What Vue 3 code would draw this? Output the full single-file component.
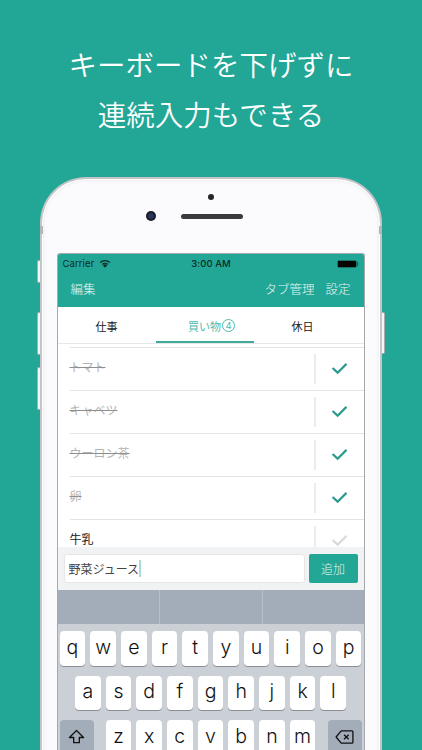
<script setup>
const items = [
  { name: 'トマト', done: true },
  { name: 'キャベツ', done: true },
  { name: 'ウーロン茶', done: true },
  { name: '卵', done: true },
  { name: '牛乳', done: false },
]
const rows = [
  { cls: 'row-q', keys: ['q', 'w', 'e', 'r', 't', 'y', 'u', 'i', 'o', 'p'] },
  { cls: 'row-a', keys: ['a', 's', 'd', 'f', 'g', 'h', 'j', 'k', 'l'] },
]
const zKeys = ['z', 'x', 'c', 'v', 'b', 'n', 'm']
</script>

<template>
  <div class="page">
    <h1 class="title">
      <span>キーボードを下げずに</span>
      <span>連続入力もできる</span>
    </h1>
    <div class="phone">
      <i class="btn btn-mute"></i>
      <i class="btn btn-up"></i>
      <i class="btn btn-down"></i>
      <i class="btn btn-power"></i>
      <i class="band band-l"></i>
      <i class="band band-r"></i>
      <div class="bezel-top">
        <i class="speaker-dot"></i>
        <div class="cam-row">
          <i class="camera"></i>
          <i class="speaker"></i>
        </div>
      </div>
      <div class="screen">
        <header class="head">
          <div class="status">
            <div class="status-left">
              <span>Carrier</span>
              <svg class="wifi" viewBox="0 0 14 10" width="12" height="9">
                <path d="M7 10 4.6 7.2a3.4 3.4 0 0 1 4.8 0Z" fill="#0c2a26" />
                <path d="M3.1 5.6a5.6 5.6 0 0 1 7.8 0l-1 1.1a4.2 4.2 0 0 0-5.8 0Z" fill="#0c2a26" />
                <path d="M.8 3.3a8.9 8.9 0 0 1 12.4 0l-1.1 1.2a7.3 7.3 0 0 0-10.2 0Z" fill="#0c2a26" />
              </svg>
            </div>
            <span class="clock">3:00 AM</span>
            <div class="battery"><i></i></div>
          </div>
          <nav class="nav">
            <span>編集</span>
            <div class="nav-right">
              <span>タブ管理</span>
              <span>設定</span>
            </div>
          </nav>
        </header>
        <div class="tabs">
          <div class="tab">仕事</div>
          <div class="tab active">買い物<span class="count">4</span></div>
          <div class="tab">休日</div>
        </div>
        <ul class="list">
          <li v-for="item in items" :key="item.name" class="item">
            <span class="name" :class="{ done: item.done }">{{ item.name }}</span>
            <div class="check-cell">
              <svg viewBox="0 0 18 14" width="17" height="13" class="check" :class="{ on: item.done }">
                <path d="M1.5 6.5 7 11.5 16.5 2" fill="none" stroke="currentColor" stroke-width="2.4" />
              </svg>
            </div>
          </li>
        </ul>
        <div class="input-bar">
          <div class="input">野菜ジュース<i class="caret"></i></div>
          <button class="add">追加</button>
        </div>
        <div class="suggest"><i></i><i></i><i></i></div>
        <div class="keyboard">
          <div v-for="row in rows" :key="row.cls" class="key-row" :class="row.cls">
            <div v-for="k in row.keys" :key="k" class="key">{{ k }}</div>
          </div>
          <div class="key-row row-z">
            <div class="key fn">
              <svg viewBox="0 0 18 17" width="17" height="16">
                <path d="M9 1.5 1.5 9H6v5.5h6V9h4.5Z" fill="none" stroke="#111" stroke-width="1.4" stroke-linejoin="round" />
              </svg>
            </div>
            <div class="letters">
              <div v-for="k in zKeys" :key="k" class="key">{{ k }}</div>
            </div>
            <div class="key fn">
              <svg viewBox="0 0 20 15" width="19" height="14">
                <path d="M6.5 1H18a1 1 0 0 1 1 1v11a1 1 0 0 1-1 1H6.5L1 7.5Z" fill="none" stroke="#111" stroke-width="1.4" stroke-linejoin="round" />
                <path d="m9.5 5 5 5m0-5-5 5" fill="none" stroke="#111" stroke-width="1.4" />
              </svg>
            </div>
          </div>
        </div>
      </div>
    </div>
  </div>
</template>

<style>
html, body { margin: 0; background: #22a797; }
</style>

<style scoped>
.page {
  width: 422px;
  height: 750px;
  overflow: hidden;
  background: #22a797;
  font-family: "Noto Sans CJK JP", "Noto Sans", sans-serif;
  box-sizing: border-box;
  padding-top: 39px;
}
.title {
  margin: 0 0 38px;
  display: flex;
  flex-direction: column;
  align-items: center;
  color: #fff;
  font-size: 28.5px;
  font-weight: 350;
  line-height: 50px;
}
.phone {
  position: relative;
  width: 342px;
  height: 640px;
  margin-left: 40px;
  box-sizing: border-box;
  padding: 0 14.5px;
  background: #fbfbfd;
  border: 2px solid #c3c5c9;
  border-bottom: 0;
  border-radius: 46px 46px 0 0;
  box-shadow: inset 0 0 0 1px #fff, inset 0 0 3px 2px #eeeff1;
}
.btn {
  position: absolute;
  width: 3px;
  background: #f4f5f6;
  border: 1px solid #a9adb0;
  box-sizing: border-box;
}
.btn-mute { left: -5px; top: 81px; height: 23px; border-right: 0; border-radius: 2px 0 0 2px; }
.btn-up { left: -5px; top: 133px; height: 43px; border-right: 0; border-radius: 2px 0 0 2px; }
.btn-down { left: -5px; top: 188px; height: 43px; border-right: 0; border-radius: 2px 0 0 2px; }
.btn-power { right: -5px; top: 133px; height: 42px; border-left: 0; border-radius: 0 2px 2px 0; }
.band {
  position: absolute;
  top: 47px;
  width: 3px;
  height: 8px;
  background: #b4b6ba;
}
.band-l { left: -2px; }
.band-r { right: -2px; }
.bezel-top {
  height: 74px;
  display: flex;
  flex-direction: column;
  align-items: center;
  padding-top: 15px;
  box-sizing: border-box;
}
.speaker-dot {
  width: 6px;
  height: 6px;
  border-radius: 50%;
  background: #23252a;
}
.cam-row {
  display: flex;
  align-items: center;
  gap: 25px;
  margin-top: 11px;
  margin-left: -33px;
}
.camera {
  width: 10px;
  height: 10px;
  border-radius: 50%;
  background: radial-gradient(circle, #27365e 0 30%, #15171c 60%);
}
.speaker {
  width: 62px;
  height: 5px;
  border-radius: 3px;
  background: #3a3b3e;
}
.screen {
  width: 308px;
  height: 565px;
  overflow: hidden;
  background: #fff;
  border: 1px solid #a6a9ab;
  border-bottom: 0;
  border-radius: 3px 3px 0 0;
  box-sizing: border-box;
  display: flex;
  flex-direction: column;
}
.head { background: #22a797; height: 53px; flex: none; }
.status {
  height: 19px;
  display: grid;
  grid-template-columns: 1fr auto 1fr;
  align-items: center;
  padding: 0 6px 0 5px;
  font-family: Inter, "Liberation Sans", sans-serif;
  font-size: 9.5px;
  letter-spacing: 0.1px;
  color: #0c2a26;
}
.status-left { display: flex; align-items: center; gap: 5px; }
.clock { font-weight: 500; margin-left: 2px; }
.battery {
  position: relative;
  justify-self: end;
  width: 20px;
  height: 8px;
  border: 1px solid #187568;
  box-sizing: border-box;
  border-radius: 2px;
  margin-right: 1px;
}
.battery i { display: block; height: 100%; background: #050505; }
.battery::after {
  content: "";
  position: absolute;
  right: -2px;
  top: 1px;
  width: 1px;
  height: 4px;
  background: #0e5a50;
}
.nav {
  height: 31px;
  display: flex;
  justify-content: space-between;
  align-items: center;
  padding: 0 13px;
  color: #e6f6f3;
  font-size: 12.5px;
  font-weight: 300;
}
.nav-right { display: flex; gap: 11px; }
.tabs {
  flex: none;
  height: 37px;
  display: grid;
  grid-template-columns: repeat(3, 98px);
  border-bottom: 1px solid #e6e8e8;
  font-size: 11px;
  color: #222;
  text-align: center;
  box-sizing: border-box;
}
.tab {
  display: flex;
  align-items: center;
  justify-content: center;
  height: 36px;
  box-sizing: border-box;
  padding-top: 1px;
}
.tab.active {
  color: #4dbbae;
  border-bottom: 2px solid #3fa99c;
  padding: 3px 0 0 14px;
}
.count {
  width: 13px;
  height: 13px;
  margin-left: 1px;
  border: 1px solid #4dbbae;
  border-radius: 50%;
  box-sizing: border-box;
  font-size: 9.5px;
  line-height: 11px;
  font-family: Inter, "Liberation Sans", sans-serif;
}
.list {
  list-style: none;
  margin: 0;
  padding: 3px 0 0;
  box-sizing: border-box;
  flex: none;
  height: 203px;
  overflow: hidden;
}
.item {
  height: 43px;
  box-sizing: border-box;
  margin-left: 12px;
  border-bottom: 1px solid #e3e5e5;
  display: flex;
  align-items: center;
  justify-content: space-between;
  font-size: 12px;
  color: #222;
}
.item:first-child { height: 44px; border-top: 1px solid #e3e5e5; }
.name { position: relative; top: -2.5px; }
.name.done { color: #b4b4b4; text-decoration: line-through; text-decoration-color: #8f8f8f; }
.check-cell {
  width: 50px;
  height: 30px;
  border-left: 2px solid #ececec;
  box-sizing: border-box;
  display: flex;
  align-items: center;
  justify-content: center;
  padding-bottom: 1px;
}
.check { color: #dadada; }
.check.on { color: #2a9c8e; }
.input-bar {
  flex: none;
  height: 43px;
  background: #f0f2f3;
  display: flex;
  align-items: center;
  gap: 4px;
  padding: 0 6px;
  box-sizing: border-box;
}
.input {
  flex: 1;
  height: 29px;
  background: #fff;
  border: 1px solid #e5e7e7;
  border-radius: 3px;
  box-sizing: border-box;
  font-size: 12px;
  color: #444;
  display: flex;
  align-items: center;
  padding-left: 4px;
}
.caret { width: 2px; height: 17px; background: #a9dcd6; }
.add {
  width: 49px;
  height: 29px;
  border: 0;
  border-radius: 2px;
  background: #22a797;
  color: #dff5f1;
  font: inherit;
  font-size: 12px;
  font-weight: 300;
  padding: 0;
}
.suggest {
  flex: none;
  height: 34px;
  background: #a3adba;
  display: grid;
  grid-template-columns: 102px 103px 1fr;
}
.suggest i { border-right: 1px solid #b7bfca; }
.suggest i:last-child { border: 0; }
.keyboard {
  flex: 1;
  background: #cbd0d7;
  padding: 7px 2px 0;
  display: flex;
  flex-direction: column;
  gap: 10px;
  font-family: Inter, "Liberation Sans", sans-serif;
}
.key-row { display: flex; justify-content: center; gap: 5px; }
.key {
  width: 25.7px;
  height: 34.5px;
  flex: none;
  background: #fff;
  border-radius: 4px;
  box-shadow: 0 1px 0 #8b8e93;
  display: flex;
  align-items: center;
  justify-content: center;
  font-size: 19.5px;
  font-weight: 300;
  color: #111;
  padding-bottom: 3px;
  box-sizing: border-box;
}
.row-z { justify-content: space-between; }
.letters { display: flex; gap: 5px; }
.key.fn { width: 34px; background: #a3adba; padding-bottom: 0; }
</style>
